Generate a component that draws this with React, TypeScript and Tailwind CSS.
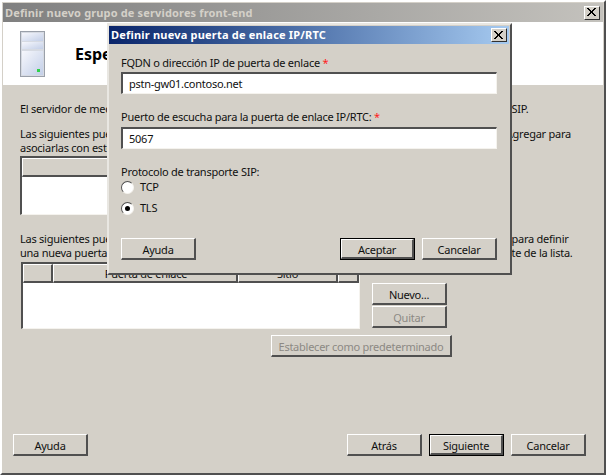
const Btn = ({ children, w = 'w-[75px]', def = false, dis = false }: { children: React.ReactNode; w?: string; def?: boolean; dis?: boolean }) => (
  <div className={`${w} h-[22px] flex items-center justify-center text-[11px] leading-none whitespace-nowrap ${dis ? 'text-[#8c8984]' : 'text-[#101010]'} ${def ? 'border border-black' : ''}`}>
    <div className="w-full h-full flex items-center justify-center pt-px border-t border-l border-white border-b-2 border-r-2 border-b-[#505050] border-r-[#505050] bg-[#d4d0c8]">
      {children}
    </div>
  </div>
);

const Sunken = ({ children, className = '' }: { children?: React.ReactNode; className?: string }) => (
  <div className={`border-t-2 border-l-2 border-t-[#505050] border-l-[#505050] border-b border-r border-b-[#f5f3ee] border-r-[#f5f3ee] bg-white ${className}`}>
    {children}
  </div>
);

const Head = ({ children, className = '' }: { children?: React.ReactNode; className?: string }) => (
  <div className={`h-[19px] flex items-center justify-center border-t border-l border-white border-r-2 border-r-[#505050] border-b-2 border-b-[#505050] bg-[#d4d0c8] text-[11px] text-[#101010] leading-none overflow-hidden whitespace-nowrap ${className}`}>
    {children}
  </div>
);

const CloseBox = () => (
  <div className="w-4 h-[14px] bg-[#d4d0c8] border-t border-l border-white border-b border-r border-b-[#303030] border-r-[#303030] flex items-center justify-center">
    <svg width="10" height="9" viewBox="0 0 10 9">
      <path d="M1 0 L9 8 M0 0 L8 8 M9 0 L1 8 M8 0 L0 8" stroke="#000" strokeWidth="1" fill="none" />
    </svg>
  </div>
);

const ServerIcon = () => (
  <svg width="25" height="46" viewBox="0 0 25 46">
    <defs>
      <linearGradient id="srv" x1="0" y1="0" x2="1" y2="1">
        <stop offset="0" stopColor="#f6f7fc" />
        <stop offset="1" stopColor="#c3cfe8" />
      </linearGradient>
    </defs>
    <rect x="0" y="0" width="25" height="46" fill="#9aa0aa" />
    <rect x="1" y="1" width="23" height="44" fill="#d6dae2" />
    <rect x="2" y="2" width="21" height="8" fill="url(#srv)" />
    <rect x="2" y="11" width="21" height="7" fill="url(#srv)" />
    <rect x="2" y="20" width="21" height="24" fill="url(#srv)" />
    <rect x="17" y="38" width="3" height="3" fill="#2fd14a" />
  </svg>
);

const Radio = ({ on = false }: { on?: boolean }) => (
  <div className="w-[13px] h-[13px] rounded-full bg-white border border-t-[#505050] border-l-[#505050] border-b-[#f5f3ee] border-r-[#f5f3ee] flex items-center justify-center">
    {on && <div className="w-[5px] h-[5px] rounded-full bg-black" />}
  </div>
);

const Req = () => <span className="text-[#ff2020]"> *</span>;

export default function App() {
  return (
    <div className="relative w-[606px] h-[475px] bg-[#d4d0c8] text-[11px] tracking-[-0.25px] text-[#101010] overflow-hidden" style={{ fontFamily: '"Noto Sans", "DejaVu Sans", sans-serif' }}>
      <div className="h-[475px] flex flex-col border-l-2 border-t-2 border-white border-r-2 border-r-[#505050] border-b-2 border-b-[#505050] p-px">
        <div className="h-[19px] flex items-center justify-between pl-[2px] pr-[3px] bg-gradient-to-r from-[#808080] to-[#c4c2bd] shrink-0">
          <span className="font-bold text-[11px] tracking-[0.15px] text-[#d4d0c8] leading-none pb-px">Definir nuevo grupo de servidores front-end</span>
          <CloseBox />
        </div>
        <div className="h-[63px] bg-white flex items-center pl-[17px] gap-[30px] shrink-0">
          <ServerIcon />
          <span className="font-bold text-[16px] tracking-normal text-black">Especificar puertas de enlace IP/RTC</span>
        </div>
        <div className="flex-1 flex flex-col pl-[17px] pr-[20px] pt-[17px] min-h-0">
          <p className="leading-[14px] whitespace-nowrap">El servidor de mediación se comunicará con las puertas de enlace, IP/RTC mediante el protocolo del SIP.</p>
          <p className="mt-[11px] leading-[14px] whitespace-nowrap">Las siguientes puertas de enlace están definidas en la topología. Seleccione algunas, y haga clic en Agregar para<br />asociarlas con este grupo de servidores.</p>
          <Sunken className="mt-[1px] w-[450px] h-[59px]">
            <Head>Puerta de enlace</Head>
          </Sunken>
          <p className="mt-[17px] leading-[14px] whitespace-nowrap">Las siguientes puertas de enlace no están asociadas a este grupo de servidores. Haga clic en Nuevo para definir<br />una nueva puerta de enlace IP/RTC o bien seleccione aquí cualquier otra puerta de enlace ya existente de la lista.</p>
          <div className="flex mt-[2px] ml-px">
            <Sunken className="w-[339px] h-[67px]">
              <div className="flex">
                <Head className="w-[30px]" />
                <Head className="w-[185px] pl-[2px]">Puerta de enlace</Head>
                <Head className="w-[100px]">Sitio</Head>
                <Head className="flex-1" />
              </div>
            </Sunken>
            <div className="ml-[12px] mt-[21px] flex flex-col gap-px">
              <Btn>Nuevo...</Btn>
              <Btn dis>Quitar</Btn>
            </div>
          </div>
          <div className="mt-[6px] ml-[251px]">
            <Btn w="w-[181px]" dis>Establecer como predeterminado</Btn>
          </div>
          <div className="flex mt-[77px] -ml-[7px] w-[573px]">
            <Btn>Ayuda</Btn>
            <div className="flex-1" />
            <div className="flex gap-[7px]">
              <Btn>Atrás</Btn>
              <Btn def>Siguiente</Btn>
              <Btn>Cancelar</Btn>
            </div>
          </div>
        </div>
      </div>

      <div className="absolute left-[107px] top-[23px] w-[405px] h-[252px] bg-[#d4d0c8] flex flex-col border-t-2 border-l-2 border-[#e9e7e2] border-r-2 border-r-[#505050] border-b-2 border-b-[#505050] pt-px pr-px">
        <div className="h-[18px] flex items-center justify-between pl-[2px] pr-[2px] bg-gradient-to-r from-[#0a246a] to-[#a6caf0] shrink-0">
          <span className="font-bold text-[11px] tracking-[0.2px] text-white leading-none pb-px">Definir nueva puerta de enlace IP/RTC</span>
          <CloseBox />
        </div>
        <div className="flex-1 flex flex-col pl-[12px] pr-[12px] pt-[11px]">
          <div className="leading-[16px]">FQDN o dirección IP de puerta de enlace<Req /></div>
          <Sunken className="mt-[1px] h-[22px] pl-[6px] flex items-center text-[11px] leading-none w-[376px]">pstn-gw01.contoso.net</Sunken>
          <div className="leading-[16px] mt-[15px]">Puerto de escucha para la puerta de enlace IP/RTC:<Req /></div>
          <Sunken className="mt-[2px] h-[22px] pl-[6px] flex items-center text-[11px] leading-none w-[376px]">5067</Sunken>
          <div className="leading-[16px] mt-[15px]">Protocolo de transporte SIP:</div>
          <div className="flex items-center gap-[6px] h-[14px]"><Radio /><span>TCP</span></div>
          <div className="flex items-center gap-[6px] h-[14px] mt-[7px]"><Radio on /><span>TLS</span></div>
          <div className="flex w-[376px] mt-[23px]">
            <Btn>Ayuda</Btn>
            <div className="flex-1" />
            <div className="flex gap-[7px]">
              <Btn def>Aceptar</Btn>
              <Btn>Cancelar</Btn>
            </div>
          </div>
        </div>
      </div>
    </div>
  );
}
